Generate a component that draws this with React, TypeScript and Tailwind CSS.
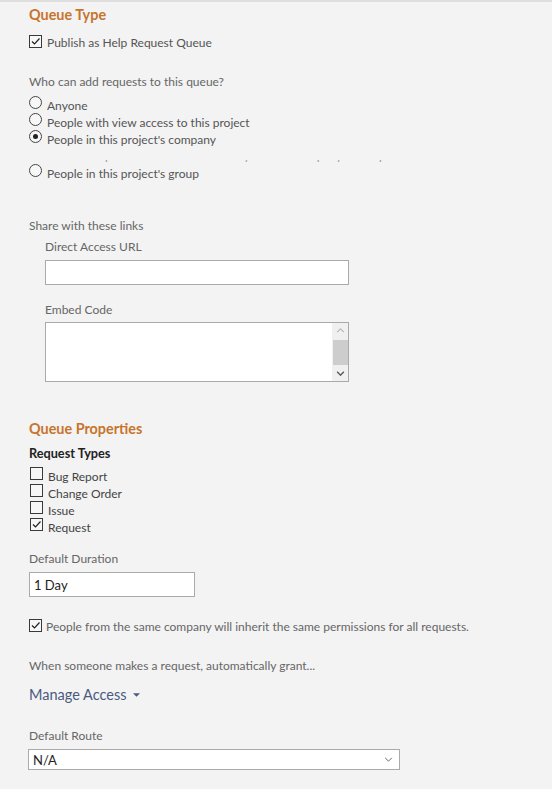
import React from "react";

const font = { fontFamily: "Lato, 'Open Sans', sans-serif" };

function Box({ checked }: { checked?: boolean }) {
  return (
    <span className="relative inline-block h-[13px] w-[13px] shrink-0 border border-[#3a3a3a] bg-[#f7f7f7]">
      {checked && (
        <svg
          viewBox="0 0 13 13"
          className="absolute -left-px -top-px h-[13px] w-[13px]"
          aria-hidden
        >
          <path d="M3 6.5 L5.5 9 L10.5 3.5" fill="none" stroke="#222" strokeWidth="1.2" />
        </svg>
      )}
    </span>
  );
}

function Radio({ on }: { on?: boolean }) {
  return (
    <span className="relative -top-[3px] flex h-[13px] w-[13px] shrink-0 items-center justify-center rounded-full border border-[#444] bg-[#f7f7f7]">
      {on && <span className="h-[5px] w-[5px] rounded-full bg-[#222]" />}
    </span>
  );
}

function RadioRow({ label, on }: { label: string; on?: boolean }) {
  return (
    <div className="flex h-[17px] items-center gap-[5px]">
      <Radio on={on} />
      <span className="text-[#555]">{label}</span>
    </div>
  );
}

function CheckRow({ label, checked }: { label: string; checked?: boolean }) {
  return (
    <div className="flex h-[17px] items-center gap-[5px] pl-px">
      <span className="relative -top-[3px] flex">
        <Box checked={checked} />
      </span>
      <span className="text-[#444]">{label}</span>
    </div>
  );
}

function Heading({ children }: { children: React.ReactNode }) {
  return (
    <h2 className="text-[14.4px] font-bold leading-[16px] text-[#c7742c]">{children}</h2>
  );
}

export default function App() {
  return (
    <div
      className="min-h-[789px] w-[552px] border-t-2 border-[#dedede] bg-[#f3f3f3] pl-[29px] pt-[5px] text-[12px] leading-[14px] text-[#666]"
      style={font}
    >
      <Heading>Queue Type</Heading>

      <div className="mt-[13px] flex h-[14px] items-center gap-[5px]">
        <span className="relative -top-[2px] flex">
          <Box checked />
        </span>
        <span className="text-[#555]">Publish as Help Request Queue</span>
      </div>

      <p className="mt-[25px]">Who can add requests to this queue?</p>

      <div className="mt-[8px]">
        <RadioRow label="Anyone" />
        <RadioRow label="People with view access to this project" />
        <RadioRow label="People in this project's company" on />
        {/* clipped row: only a few descender tips show */}
        <div className="relative h-[17px] overflow-hidden">
          <div className="absolute left-[56px] top-[12px] h-[2px] w-[300px] overflow-hidden">
            <span className="absolute left-0 top-[-11px] whitespace-nowrap text-[#999]">
              People who have a link — everyone in a company of the project group
            </span>
          </div>
        </div>
        <RadioRow label="People in this project's group" />
      </div>

      <p className="mt-[37px]">Share with these links</p>

      <div className="pl-4">
        <p className="mt-[7px]">Direct Access URL</p>
        <div className="mt-[6px] h-[25px] w-[304px] border border-[#aaa] bg-white" />

        <p className="mt-[18px]">Embed Code</p>
        <div className="mt-[5px] flex h-[60px] w-[304px] border border-[#aaa] bg-white">
          <div className="flex-1" />
          <div className="flex w-[16px] flex-col items-center bg-[#f0f0f0]">
            <svg viewBox="0 0 10 6" className="mt-[5px] h-[5px] w-[9px]" aria-hidden>
              <path d="M1 5 L5 1 L9 5" fill="none" stroke="#b8b8b8" strokeWidth="1.4" />
            </svg>
            <div className="mt-[7px] h-[25px] w-[15px] bg-[#cdcdcd]" />
            <div className="flex-1" />
            <svg viewBox="0 0 10 6" className="mb-[5px] h-[5px] w-[9px]" aria-hidden>
              <path d="M1 1 L5 5 L9 1" fill="none" stroke="#555" strokeWidth="1.6" />
            </svg>
          </div>
        </div>
      </div>

      <div className="mt-[39px]">
        <Heading>Queue Properties</Heading>
      </div>
      <p className="mt-[9px] text-[12.7px] font-bold text-[#222]">Request Types</p>

      <div className="mt-[8px]">
        <CheckRow label="Bug Report" />
        <CheckRow label="Change Order" />
        <CheckRow label="Issue" />
        <CheckRow label="Request" checked />
      </div>

      <p className="mt-[16px]">Default Duration</p>
      <div className="mt-[6px] flex h-[25px] w-[166px] items-center border border-[#aaa] bg-white pl-[4px] text-[13px] text-[#222]">
        1 Day
      </div>

      <div className="mt-[23px] flex h-[14px] items-center gap-[4px]">
        <span className="relative -top-[2px] flex">
          <Box checked />
        </span>
        <span className="text-[#666]">
          People from the same company will inherit the same permissions for all requests.
        </span>
      </div>

      <p className="mt-[25px]">When someone makes a request, automatically grant...</p>

      <button className="mt-[14px] flex h-[16px] items-center gap-[7px] text-[14.5px] leading-[16px] text-[#4a5a80]">
        Manage Access
        <svg viewBox="0 0 8 4" className="h-[4px] w-[7px]" aria-hidden>
          <path d="M0 0 L8 0 L4 4 Z" fill="#4a5a80" />
        </svg>
      </button>

      <p className="mt-[26px]">Default Route</p>
      <div className="-ml-px mt-[6px] flex h-[21px] w-[372px] items-center justify-between border border-[#aaa] bg-white pl-[4px] pr-[6px] text-[13px] text-[#222]">
        N/A
        <svg viewBox="0 0 10 6" className="h-[5px] w-[9px]" aria-hidden>
          <path d="M1 1 L5 5 L9 1" fill="none" stroke="#666" strokeWidth="1.2" />
        </svg>
      </div>
    </div>
  );
}
